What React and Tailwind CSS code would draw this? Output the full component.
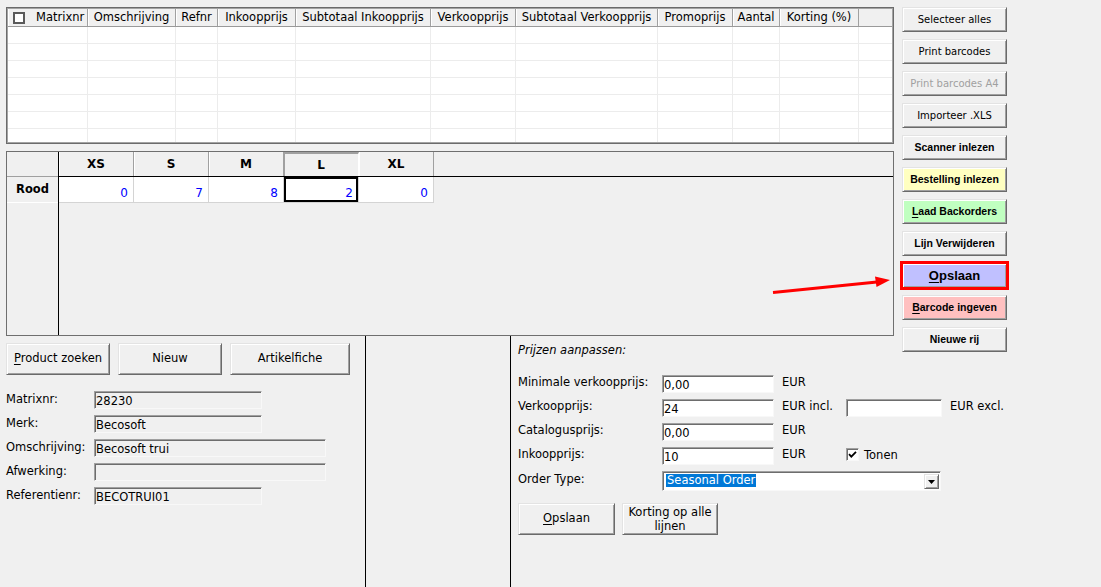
import React from 'react';

const sans = "font-['DejaVu_Sans',sans-serif]";
const boldArial = "font-['Liberation_Sans',Arial,sans-serif] font-bold";

const raised =
  'box-border border border-[#6a6a6a] border-t-[#e3e3e3] border-l-[#e3e3e3] shadow-[inset_1px_1px_0_#ffffff,inset_-1px_-1px_0_#a0a0a0]';
const sunken =
  'box-border border border-[#a0a0a0] border-r-[#f8f8f8] border-b-[#f8f8f8] shadow-[inset_1px_1px_0_#6d6d6d]';

const cols = [
  { w: 'w-[80px]', label: 'Matrixnr', check: true },
  { w: 'w-[88px]', label: 'Omschrijving' },
  { w: 'w-[42px]', label: 'Refnr' },
  { w: 'w-[78px]', label: 'Inkoopprijs' },
  { w: 'w-[135px]', label: 'Subtotaal Inkoopprijs' },
  { w: 'w-[85px]', label: 'Verkoopprijs' },
  { w: 'w-[142px]', label: 'Subtotaal Verkoopprijs' },
  { w: 'w-[75px]', label: 'Promoprijs' },
  { w: 'w-[47px]', label: 'Aantal' },
  { w: 'w-[79px]', label: 'Korting (%)' },
];

const sizes = [
  { size: 'XS', qty: 0 },
  { size: 'S', qty: 7 },
  { size: 'M', qty: 8 },
  { size: 'L', qty: 2, active: true },
  { size: 'XL', qty: 0 },
];

const sideButtons = [
  { label: 'Selecteer alles' },
  { label: 'Print barcodes' },
  { label: 'Print barcodes A4', disabled: true },
  { label: 'Importeer .XLS' },
  { label: 'Scanner inlezen', bold: true },
  { label: 'Bestelling inlezen', bold: true, bg: 'bg-[#ffffc0]' },
  { label: 'aad Backorders', key: 'L', bold: true, bg: 'bg-[#c0ffc0]' },
  { label: 'Lijn Verwijderen', bold: true },
  { label: 'pslaan', key: 'O', big: true, bg: 'bg-[#c0c0ff]' },
  { label: 'arcode ingeven', key: 'B', bold: true, bg: 'bg-[#ffc0c0]' },
  { label: 'Nieuwe rij', bold: true },
];

function OrderGrid() {
  return (
    <div className="w-[888px] h-[137px] border border-[#6b6b6b]">
      <div className="h-full border border-[#a3a3a3] bg-white overflow-hidden">
        <div className="flex h-[18px] border-b border-[#9a9a9a] bg-[#f0f0f0] text-[11.5px] leading-[17px]">
          {cols.map((c) => (
            <div
              key={c.label}
              className={`${c.w} shrink-0 border-r border-[#a0a0a0] shadow-[inset_1px_0_0_#ffffff] flex items-center ${c.check ? 'pl-[5px]' : 'justify-center'}`}
            >
              {c.check && <span className="w-[12px] h-[12px] shrink-0 border-2 border-[#5a5a5a] bg-white mr-[11px]" />}
              <span className="whitespace-nowrap">{c.label}</span>
            </div>
          ))}
          <div className="flex-1" />
        </div>
        {[0, 1, 2, 3, 4, 5, 6].map((r) => (
          <div key={r} className="flex h-[17px] border-b border-[#ececec]">
            {cols.map((c) => (
              <div key={c.label} className={`${c.w} shrink-0 border-r border-[#ececec]`} />
            ))}
          </div>
        ))}
      </div>
    </div>
  );
}

function SizeGrid() {
  return (
    <div className="mt-[7px] h-[185px] border border-[#6f6f6f] flex">
      <div className="w-[52px] shrink-0 border-r border-black">
        <div className="h-[25px] border-b border-[#a0a0a0] bg-[#f0f0f0]" />
        <div className="h-[26px] border-b border-white flex items-center justify-center font-bold text-[11.5px]">
          Rood
        </div>
      </div>
      <div className="flex-1">
        <div className="flex h-[25px] border-b border-black">
          {sizes.map((s) => (
            <div
              key={s.size}
              className={`w-[75px] h-full border-r flex items-center justify-center font-bold text-[12px] ${
                s.active
                  ? 'border-r-white border-t-2 border-t-[#a0a0a0] shadow-[inset_1px_0_0_#a0a0a0]'
                  : 'border-[#a0a0a0] shadow-[inset_1px_0_0_#ffffff]'
              }`}
            >
              {s.size}
            </div>
          ))}
        </div>
        <div className="flex h-[26px]">
          {sizes.map((s) => (
            <div
              key={s.size}
              className={`w-[75px] h-full bg-white border-r border-b border-[#d4d4d4] flex items-end justify-end pr-[5px] pb-[1px] text-[12px] leading-[16px] text-[#0000ff] ${
                s.active ? 'shadow-[inset_0_0_0_2px_#000000]' : ''
              }`}
            >
              {s.qty}
            </div>
          ))}
        </div>
      </div>
    </div>
  );
}

function SideButtons() {
  return (
    <div className="w-[105px] flex flex-col gap-[7px]">
      {sideButtons.map((b) => (
        <button
          key={b.label}
          type="button"
          className={`${raised} shrink-0 h-[25px] w-full flex items-center justify-center whitespace-nowrap ${b.bg || 'bg-[#f0f0f0]'} ${
            b.big
              ? `${boldArial} text-[13px] outline-[3px] outline-[#ff0000] -outline-offset-1`
              : b.bold
              ? `${boldArial} text-[10.5px]`
              : 'text-[10px]'
          } ${b.disabled ? 'text-[#a0a0a0]' : 'text-black'}`}
        >
          {b.key && <u className="underline-offset-2">{b.key}</u>}
          {b.label}
        </button>
      ))}
    </div>
  );
}

function Field({ label, value, wide }) {
  return (
    <div className="flex h-[18px]">
      <div className="w-[88px] shrink-0 leading-[16px]">{label}</div>
      <div className={`${sunken} ${wide ? 'w-[232px]' : 'w-[168px]'} h-[18px] bg-[#f0f0f0] pl-[1px] pt-[3px] leading-[13px] overflow-hidden`}>
        {value}
      </div>
    </div>
  );
}

function PriceInput({ value, className = 'w-[112px]' }) {
  return (
    <div className={`${sunken} ${className} shrink-0 h-[18px] bg-white pl-[1px] pt-[3px] leading-[13px] overflow-hidden`}>
      {value}
    </div>
  );
}

function Checkbox() {
  return (
    <span className={`${sunken} w-[13px] h-[13px] bg-white flex items-center justify-center`}>
      <svg width="9" height="9" viewBox="0 0 9 9">
        <path d="M1 4.2 L3.3 6.6 L8 1.8" fill="none" stroke="#000" strokeWidth="1.8" />
      </svg>
    </span>
  );
}

function LeftPanel() {
  return (
    <div className="w-[366px] shrink-0 border-r border-black pl-[6px] pt-[7px]">
      <div className="flex gap-[8px]">
        <button type="button" className={`${raised} w-[104px] h-[32px] bg-[#f0f0f0]`}>
          <u className="underline-offset-2">P</u>roduct zoeken
        </button>
        <button type="button" className={`${raised} w-[104px] h-[32px] bg-[#f0f0f0]`}>
          Nieuw
        </button>
        <button type="button" className={`${raised} w-[120px] h-[32px] bg-[#f0f0f0]`}>
          Artikelfiche
        </button>
      </div>
      <div className="mt-[16px] flex flex-col gap-[6px]">
        <Field label="Matrixnr:" value="28230" />
        <Field label="Merk:" value="Becosoft" />
        <Field label="Omschrijving:" value="Becosoft trui" wide />
        <Field label="Afwerking:" value="" wide />
        <Field label="Referentienr:" value="BECOTRUI01" />
      </div>
    </div>
  );
}

function PricePanel() {
  return (
    <div className="flex-1 pl-[7px] pt-[6px]">
      <div className="italic leading-[16px]">Prijzen aanpassen:</div>
      <div className="mt-[17px] flex flex-col gap-[6px]">
        <div className="flex h-[18px] leading-[14px]">
          <div className="w-[144px] shrink-0 whitespace-nowrap">Minimale verkoopprijs:</div>
          <PriceInput value="0,00" />
          <div className="ml-[8px]">EUR</div>
        </div>
        <div className="flex h-[18px] leading-[14px]">
          <div className="w-[144px] shrink-0">Verkoopprijs:</div>
          <PriceInput value="24" />
          <div className="ml-[8px] w-[64px] shrink-0 whitespace-nowrap">EUR incl.</div>
          <PriceInput value="" className="w-[96px]" />
          <div className="ml-[8px] whitespace-nowrap">EUR excl.</div>
        </div>
        <div className="flex h-[18px] leading-[14px]">
          <div className="w-[144px] shrink-0">Catalogusprijs:</div>
          <PriceInput value="0,00" />
          <div className="ml-[8px]">EUR</div>
        </div>
        <div className="flex h-[18px] leading-[14px]">
          <div className="w-[144px] shrink-0">Inkoopprijs:</div>
          <PriceInput value="10" />
          <div className="ml-[8px] w-[64px] shrink-0">EUR</div>
          <div className="mt-[1px] flex items-start gap-[5px]">
            <Checkbox />
            <span className="leading-[15px]">Tonen</span>
          </div>
        </div>
        <div className="flex h-[20px] leading-[16px]">
          <div className="w-[144px] shrink-0">Order Type:</div>
          <div className={`${sunken} w-[279px] h-[20px] bg-white flex items-start pl-[3px] pt-[2px] pr-[1px]`}>
            <span className="h-[13px] leading-[13px] px-[1px] bg-[#0078d7] text-white whitespace-nowrap">Seasonal Order</span>
            <span className="flex-1" />
            <span className={`${raised} w-[15px] h-[15px] bg-[#f0f0f0] flex items-center justify-center`}>
              <svg width="7" height="4" viewBox="0 0 7 4">
                <path d="M0 0 H7 L3.5 4 Z" fill="#000" />
              </svg>
            </span>
          </div>
        </div>
      </div>
      <div className="mt-[12px] flex gap-[7px]">
        <button type="button" className={`${raised} w-[97px] h-[32px] bg-[#f0f0f0]`}>
          <u className="underline-offset-2">O</u>pslaan
        </button>
        <button type="button" className={`${raised} w-[96px] h-[32px] bg-[#f0f0f0] leading-[14px]`}>
          Korting op alle
          <br />
          lijnen
        </button>
      </div>
    </div>
  );
}

export default function App() {
  return (
    <div className={`${sans} relative w-[1101px] h-[587px] overflow-hidden bg-[#f0f0f0] text-[11.5px] text-black`}>
      <div className="flex h-[336px] pt-[7px] pl-[6px] gap-[8px]">
        <div className="w-[888px] shrink-0">
          <OrderGrid />
          <SizeGrid />
        </div>
        <SideButtons />
      </div>

      <div className="flex h-[251px]">
        <LeftPanel />
        <div className="w-[145px] shrink-0 border-r border-black" />
        <PricePanel />
      </div>

      {/* annotation arrow pointing at Opslaan */}
      <svg className="absolute left-[770px] top-[274px]" width="125" height="22" viewBox="0 0 125 22">
        <line x1="3" y1="18.5" x2="107" y2="8" stroke="#ff0000" strokeWidth="3" />
        <polygon points="120,6 105,2.5 106.5,13" fill="#ff0000" />
      </svg>
    </div>
  );
}
